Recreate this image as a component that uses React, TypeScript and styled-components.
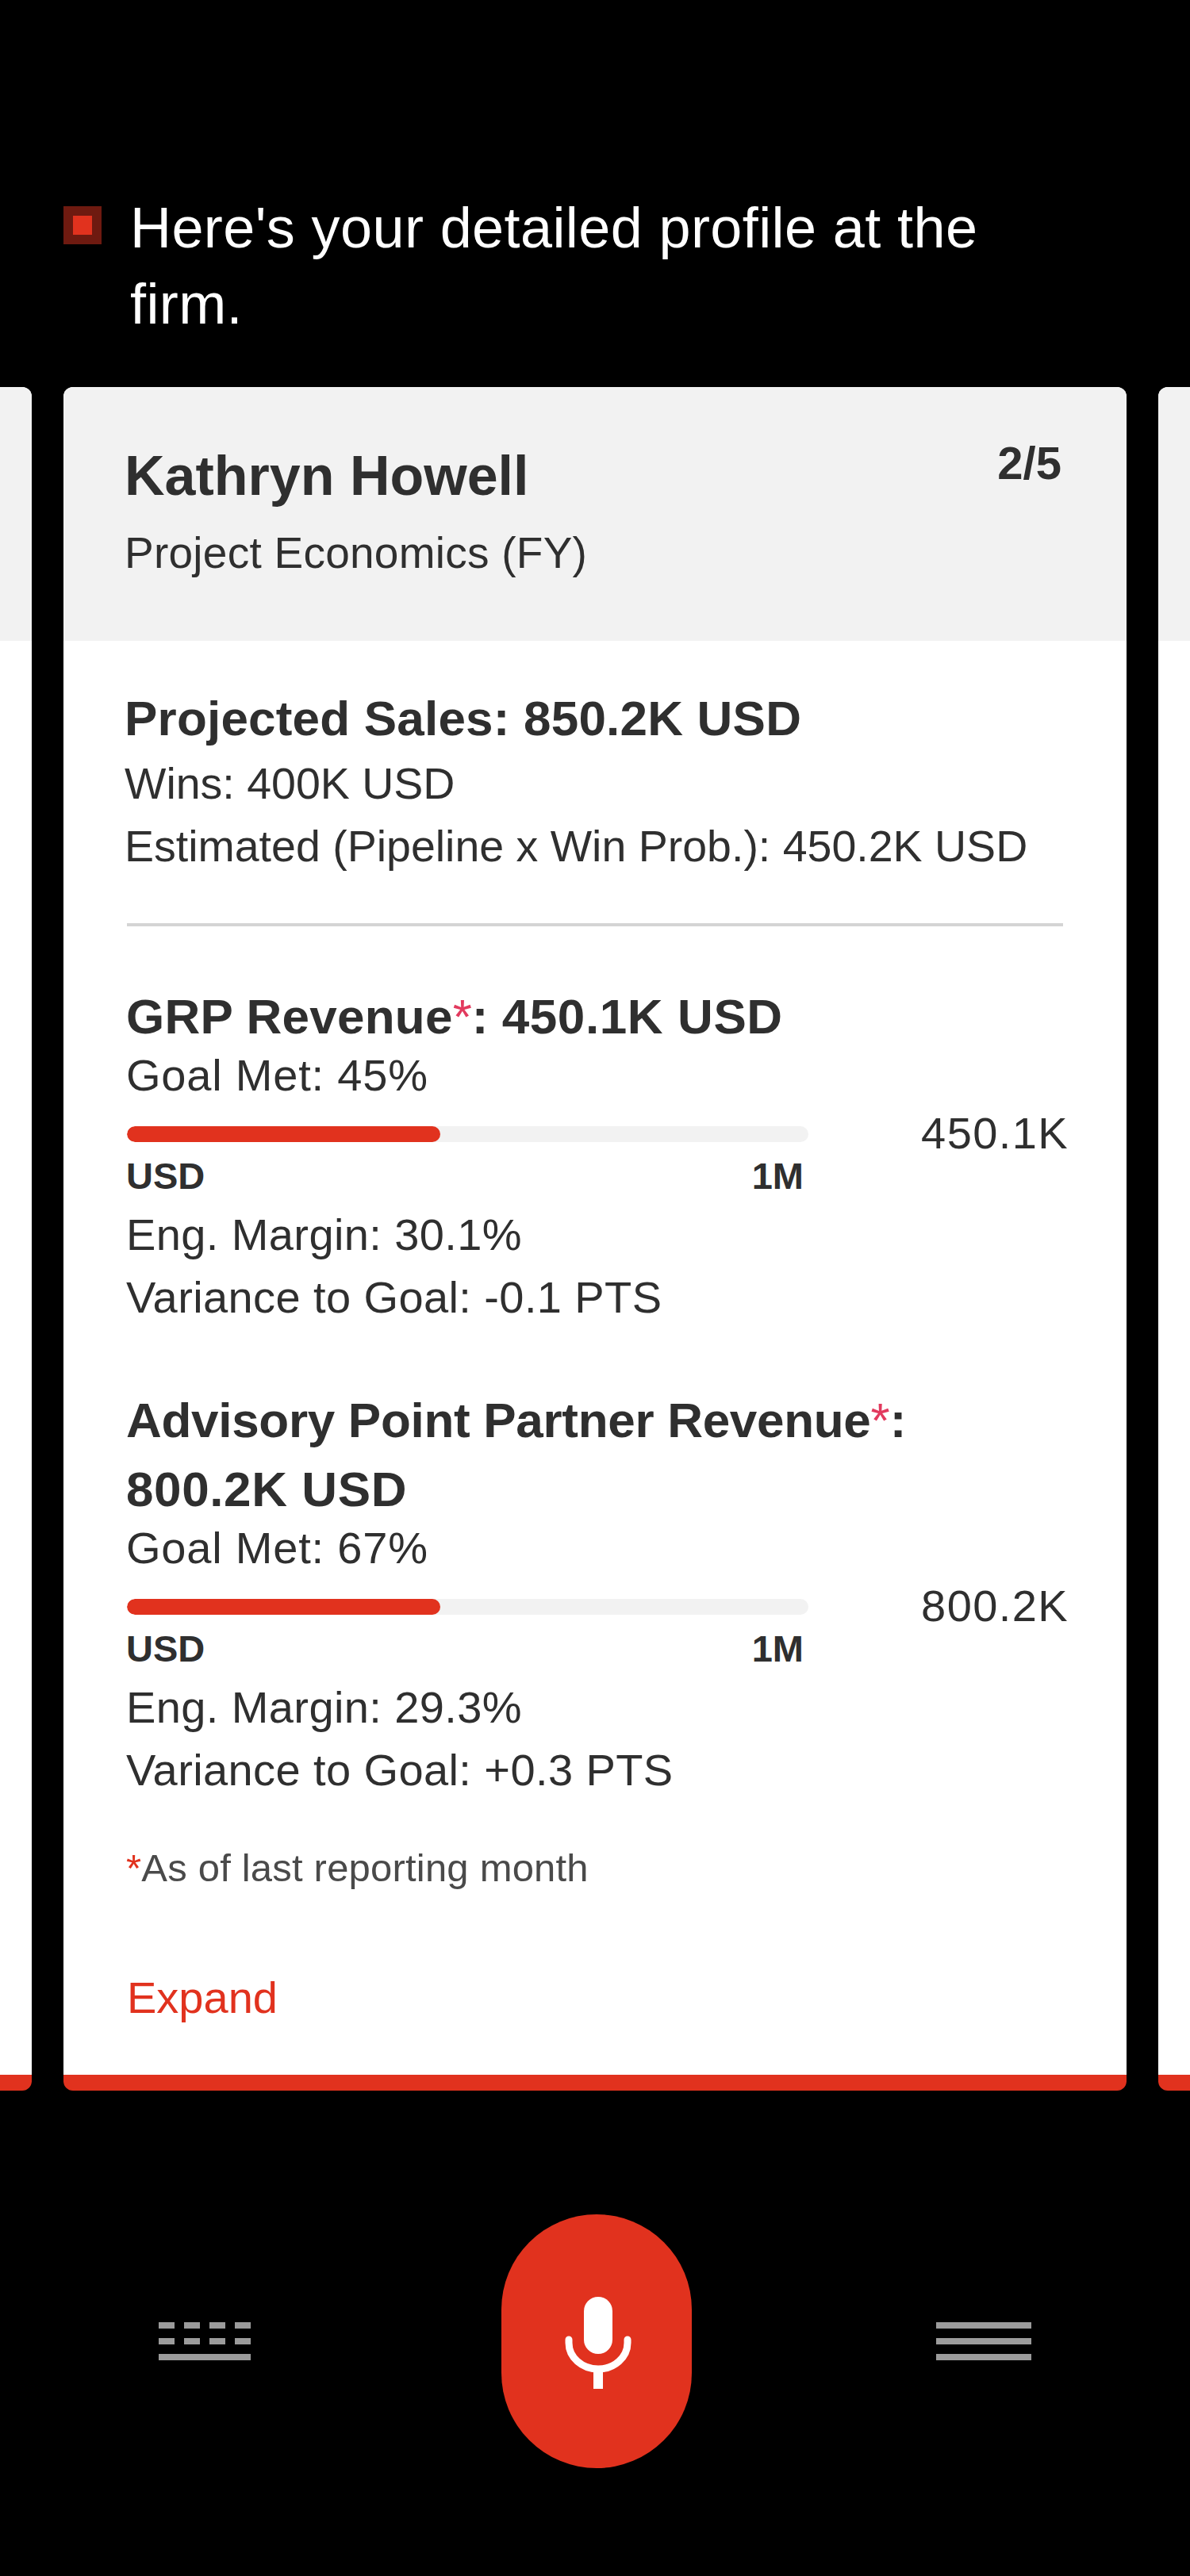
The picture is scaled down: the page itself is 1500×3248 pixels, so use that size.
import { createGlobalStyle, styled } from 'styled-components';

const red = '#e1321e';
const ink = '#2f2f2f';

const GlobalStyle = createGlobalStyle`
  html, body {
    margin: 0;
    background: #000;
  }
  body {
    font-family: "Liberation Sans", Arial, sans-serif;
    min-height: 3248px;
  }
  * {
    box-sizing: border-box;
  }
`;

const Screen = styled.div`
  width: 1500px;
  height: 3248px;
  overflow: hidden;
  background: #000;
`;

const Message = styled.div`
  display: flex;
  align-items: flex-start;
  gap: 36px;
  height: 488px;
  padding: 239px 260px 0 80px;
`;

const StatusMark = styled.span`
  flex: none;
  width: 48px;
  height: 48px;
  margin-top: 21px;
  background: ${red};
  border: 12px solid #6e1a10;
`;

const MessageText = styled.p`
  margin: 0;
  color: #fff;
  font-size: 72px;
  line-height: 96px;
  letter-spacing: 0.4px;
`;

const Carousel = styled.div`
  display: flex;
  justify-content: center;
  gap: 40px;
`;

const Card = styled.section`
  flex: none;
  width: 1340px;
  height: 2148px;
  overflow: hidden;
  background: #fff;
  border-bottom: 20px solid ${red};
  border-radius: 12px;
`;

const CardHeader = styled.header`
  display: flex;
  justify-content: space-between;
  align-items: flex-start;
  height: 320px;
  padding: 66px 82px 0 77px;
  background: #f2f2f2;
  color: ${ink};
`;

const Name = styled.h2`
  margin: 4px 0 0;
  font-size: 70px;
  line-height: 84px;
  font-weight: 700;
`;

const Subtitle = styled.p`
  margin: 19px 0 0;
  font-size: 55px;
  line-height: 72px;
  letter-spacing: 0.25px;
`;

const Count = styled.span`
  font-size: 58px;
  line-height: 60px;
  font-weight: 700;
`;

const CardBody = styled.div`
  padding: 55px 74px 0 77px;
  color: ${ink};
`;

const Heading = styled.h3`
  margin: 0;
  font-size: 62px;
  line-height: 87px;
  font-weight: 700;
`;

const SummaryHeading = styled(Heading)`
  line-height: 86px;
  letter-spacing: 0.2px;
`;

const MetricTitle = styled.span<{ $tracking: number }>`
  letter-spacing: ${(p) => p.$tracking}px;
`;

const MetricAmount = styled.span`
  letter-spacing: 0.6px;
`;

const Line = styled.p`
  margin: 0;
  font-size: 55.5px;
  line-height: 79px;
`;

const Divider = styled.hr`
  height: 4px;
  margin: 57px 6px 0 3px;
  border: none;
  background: #d4d4d4;
`;

const Metric = styled.div<{ $first?: boolean }>`
  margin: ${(p) => (p.$first ? '70px' : '72px')} 0 0 2px;
`;

const MetricLine = styled(Line)`
  font-size: 56px;
  letter-spacing: 0.4px;
`;

const GoalLine = styled(MetricLine)`
  margin-top: 1px;
  line-height: 60px;
  letter-spacing: 0.8px;
`;

const BarRow = styled.div`
  display: grid;
  grid-template-columns: 860px 1fr;
  margin-top: 34px;
`;

const BarTrack = styled.div`
  height: 20px;
  margin-left: 1px;
  background: #f2f2f2;
  border-radius: 10px;
  overflow: hidden;
`;

const BarFill = styled.div`
  height: 100%;
  background: ${red};
  border-radius: 10px;
`;

const Scale = styled.div`
  display: flex;
  justify-content: space-between;
  margin-top: 13px;
  padding-right: 6px;
  font-size: 47px;
  line-height: 60px;
  font-weight: 700;
`;

const BarValue = styled.span`
  margin: -21px -1px 0 0;
  font-size: 56px;
  line-height: 60px;
  letter-spacing: 1.4px;
  text-align: right;
`;

const MetricFoot = styled.div`
  margin-top: 4px;
`;

const Star = styled.span`
  color: #e23a5e;
  font-weight: 400;
`;

const Footnote = styled.p`
  margin: 54px 0 0 2px;
  color: #4a4a4a;
  font-size: 49px;
  line-height: 60px;
  letter-spacing: 0.2px;
`;

const FootStar = styled.span`
  color: ${red};
`;

const ExpandLink = styled.a`
  display: block;
  margin: 99px 0 0 3px;
  color: ${red};
  font-size: 56px;
  line-height: 70px;
`;

const BottomBar = styled.nav`
  display: flex;
  align-items: center;
  padding: 156px 0 0 200px;
`;

const KeyboardIcon = styled.div`
  display: grid;
  grid-template-columns: repeat(4, 20px);
  grid-auto-rows: 8px;
  gap: 12px;
  width: 116px;
`;

const Key = styled.span`
  background: #9b9b9b;
`;

const SpaceKey = styled(Key)`
  grid-column: 1 / -1;
`;

const MicButton = styled.button`
  display: flex;
  align-items: center;
  justify-content: center;
  width: 240px;
  height: 320px;
  margin: 0 308px 0 316px;
  padding: 4px 0 0 4px;
  border: none;
  border-radius: 120px;
  background: ${red};
`;

const MenuIcon = styled.div`
  display: flex;
  flex-direction: column;
  gap: 12px;
  width: 120px;
`;

const MenuBar = styled.span`
  height: 8px;
  background: #9b9b9b;
`;

type MetricData = {
  title: string;
  tracking: number;
  value: string;
  goal: number;
  fill: number;
  margin: string;
  variance: string;
  first?: boolean;
};

const metrics: MetricData[] = [
  { title: 'GRP Revenue', tracking: 0.25, value: '450.1K', goal: 45, fill: 46, margin: '30.1%', variance: '-0.1 PTS', first: true },
  { title: 'Advisory Point Partner Revenue', tracking: -0.3, value: '800.2K', goal: 67, fill: 46, margin: '29.3%', variance: '+0.3 PTS' },
];

function MicGlyph() {
  return (
    <svg width="84" height="116" viewBox="0 0 84 116">
      <rect x="24" y="0" width="36" height="72" rx="18" fill="#fff" />
      <path d="M5 54v4a37 33 0 0 0 74 0v-4" fill="none" stroke="#fff" strokeWidth="9" strokeLinecap="round" />
      <rect x="36" y="92" width="12" height="24" fill="#fff" />
    </svg>
  );
}

function MetricBlock({ title, tracking, value, goal, fill, margin, variance, first }: MetricData) {
  return (
    <Metric $first={first}>
      <Heading>
        <MetricTitle $tracking={tracking}>{title}</MetricTitle>
        <Star>*</Star>: <MetricAmount>{value} USD</MetricAmount>
      </Heading>
      <GoalLine>Goal Met: {goal}%</GoalLine>
      <BarRow>
        <div>
          <BarTrack>
            <BarFill style={{ width: `${fill}%` }} />
          </BarTrack>
          <Scale>
            <span>USD</span>
            <span>1M</span>
          </Scale>
        </div>
        <BarValue>{value}</BarValue>
      </BarRow>
      <MetricFoot>
        <MetricLine>Eng. Margin: {margin}</MetricLine>
        <MetricLine>Variance to Goal: {variance}</MetricLine>
      </MetricFoot>
    </Metric>
  );
}

export default function App() {
  return (
    <Screen>
      <GlobalStyle />
      <Message>
        <StatusMark />
        <MessageText>Here's your detailed profile at the firm.</MessageText>
      </Message>
      <Carousel>
        <Card>
          <CardHeader />
        </Card>
        <Card>
          <CardHeader>
            <div>
              <Name>Kathryn Howell</Name>
              <Subtitle>Project Economics (FY)</Subtitle>
            </div>
            <Count>2/5</Count>
          </CardHeader>
          <CardBody>
            <SummaryHeading>Projected Sales: 850.2K USD</SummaryHeading>
            <Line>Wins: 400K USD</Line>
            <Line>Estimated (Pipeline x Win Prob.): 450.2K USD</Line>
            <Divider />
            {metrics.map((m) => (
              <MetricBlock key={m.title} {...m} />
            ))}
            <Footnote>
              <FootStar>*</FootStar>As of last reporting month
            </Footnote>
            <ExpandLink>Expand</ExpandLink>
          </CardBody>
        </Card>
        <Card>
          <CardHeader />
        </Card>
      </Carousel>
      <BottomBar>
        <KeyboardIcon>
          <Key />
          <Key />
          <Key />
          <Key />
          <Key />
          <Key />
          <Key />
          <Key />
          <SpaceKey />
        </KeyboardIcon>
        <MicButton aria-label="Speak">
          <MicGlyph />
        </MicButton>
        <MenuIcon>
          <MenuBar />
          <MenuBar />
          <MenuBar />
        </MenuIcon>
      </BottomBar>
    </Screen>
  );
}
